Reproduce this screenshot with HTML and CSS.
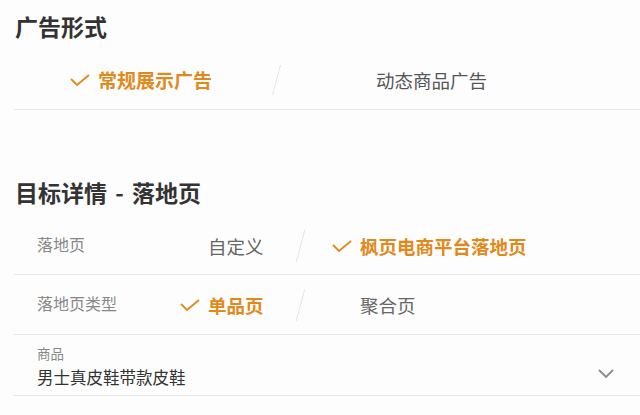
FILE: index.html
```html
<!DOCTYPE html>
<html>
<head>
	<meta charset="UTF-8">
	<title>广告设置</title>
	<link rel="stylesheet" href="styles.css">
</head>
<body>
	<h2 class="title">广告形式</h2>
	<div class="row row-type">
		<div class="opt on opt-a">
			<svg class="check" viewBox="0 0 20 12"><polyline points="1,5 7,11 19,1"/></svg>
			<span>常规展示广告</span>
		</div>
		<i class="slash"></i>
		<div class="opt opt-b">
			<span>动态商品广告</span>
		</div>
	</div>

	<h2 class="title title-2">目标详情 - 落地页</h2>
	<div class="row row-field">
		<label>落地页</label>
		<div class="opt opt-1">
			<svg class="check hide" viewBox="0 0 20 12"><polyline points="1,5 7,11 19,1"/></svg>
			<span>自定义</span>
		</div>
		<i class="slash"></i>
		<div class="opt on opt-2">
			<svg class="check" viewBox="0 0 20 12"><polyline points="1,5 7,11 19,1"/></svg>
			<span>枫页电商平台落地页</span>
		</div>
	</div>
	<div class="row row-field row-tall">
		<label>落地页类型</label>
		<div class="opt on opt-1">
			<svg class="check" viewBox="0 0 20 12"><polyline points="1,5 7,11 19,1"/></svg>
			<span>单品页</span>
		</div>
		<i class="slash"></i>
		<div class="opt opt-2">
			<svg class="check hide" viewBox="0 0 20 12"><polyline points="1,5 7,11 19,1"/></svg>
			<span>聚合页</span>
		</div>
	</div>
	<div class="select">
		<div class="select-text">
			<div class="select-label">商品</div>
			<div class="select-value">男士真皮鞋带款皮鞋</div>
		</div>
		<svg class="chev" viewBox="0 0 16 10"><polyline points="1,1 8,8 15,1"/></svg>
	</div>
</body>
</html>
```

FILE: styles.css
```css
body {
	margin: 0;
	padding: 0;
	background-color: #fdfdfd;
	font-family: "Noto Sans CJK SC", "Noto Sans", sans-serif;
	color: #333;
}

.title {
	margin: 0;
	padding-left: 15px;
	height: 56px;
	line-height: 52px;
	font-size: 23px;
	font-weight: bold;
	color: #333;
	word-spacing: 3px;
}

.title-2 {
	margin-top: 54px;
	height: 54px;
	line-height: 56px;
}

.row {
	display: flex;
	align-items: center;
	margin-left: 14px;
	border-bottom: 1px solid #e6e6e6;
}

.row-type {
	height: 47px;
	padding-left: 56px;
	padding-bottom: 6px;
}

.row-field {
	height: 56px;
	padding-left: 23px;
}

.row-tall {
	height: 59px;
}

.row label {
	width: 143px;
	font-size: 16px;
	color: #888;
	margin-top: -4px;
}

.opt {
	display: flex;
	align-items: center;
	font-size: 18.5px;
	color: #666;
}

.opt.on {
	color: #e2891c;
	font-weight: bold;
}

.check {
	width: 20px;
	height: 12px;
	margin-right: 8px;
	fill: none;
	stroke: #e2891c;
	stroke-width: 1.8;
}

.check.hide {
	visibility: hidden;
}

.opt-a {
	width: 206px;
	font-size: 19px;
}

.opt-b {
	margin-left: 99px;
	font-size: 18.5px;
	color: #555;
}

.opt-1 {
	width: 120px;
}

.opt-2 {
	margin-left: 31px;
}

.slash {
	display: block;
	width: 1px;
	height: 30px;
	background-color: #e4e4e4;
	transform: skewX(-15deg);
}

.row-field .slash {
	height: 32px;
}

.select {
	display: flex;
	align-items: flex-start;
	margin-left: 14px;
	height: 60px;
	padding-left: 23px;
	padding-right: 26px;
	border-bottom: 1px solid #e6e6e6;
}

.select-text {
	flex: 1;
	padding-top: 8px;
}

.select-label {
	font-size: 13.5px;
	color: #888;
	line-height: 20px;
}

.select-value {
	margin-top: 1px;
	font-size: 16.5px;
	color: #333;
	line-height: 26px;
}

.chev {
	width: 16px;
	height: 10px;
	margin-top: 34px;
	fill: none;
	stroke: #8a8a8a;
	stroke-width: 1.8;
}
```
